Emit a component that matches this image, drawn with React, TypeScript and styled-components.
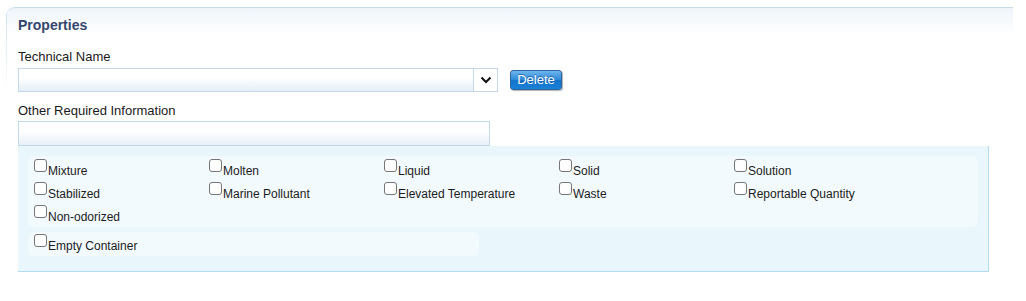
import styled, { createGlobalStyle } from 'styled-components';

const GlobalStyle = createGlobalStyle`
  body {
    margin: 0;
    background: #ffffff;
    font-family: "Liberation Sans", Arial, sans-serif;
  }
`;

const mainFlags = [
  'Mixture',
  'Molten',
  'Liquid',
  'Solid',
  'Solution',
  'Stabilized',
  'Marine Pollutant',
  'Elevated Temperature',
  'Waste',
  'Reportable Quantity',
  'Non-odorized',
];

const extraFlags = ['Empty Container'];

function Flag({ label }: { label: string }) {
  return (
    <StFlag>
      <StCheckbox type="checkbox" />
      <span>{label}</span>
    </StFlag>
  );
}

function App() {
  return (
    <>
      <GlobalStyle />
      <StPage>
        <StPanel>
          <StTitle>Properties</StTitle>
          <StBody>
            <StFieldLabel>Technical Name</StFieldLabel>
            <StSelectRow>
              <StSelect>
                <StSelectArrow>
                  <svg width="12" height="8" viewBox="0 0 12 8">
                    <path d="M1.5 1.5 L6 6 L10.5 1.5" fill="none" stroke="#111" strokeWidth="2" />
                  </svg>
                </StSelectArrow>
              </StSelect>
              <StDeleteButton>Delete</StDeleteButton>
            </StSelectRow>
            <StFieldLabel $gap={11}>Other Required Information</StFieldLabel>
            <StTextInput />
            <StFlagsPanel>
              <StFlagGroup $width={950} $pad={2}>
                {mainFlags.map((f) => (
                  <Flag key={f} label={f} />
                ))}
              </StFlagGroup>
              <StFlagGroup $width={451} $pad={1}>
                {extraFlags.map((f) => (
                  <Flag key={f} label={f} />
                ))}
              </StFlagGroup>
            </StFlagsPanel>
          </StBody>
        </StPanel>
      </StPage>
    </>
  );
}

export default App;

const StPage = styled.div`
  padding: 7px 13px 0 6px;
`;

const StPanel = styled.section`
  position: relative;
  border-top: 1px solid #c6dcea;
  border-top-left-radius: 9px;
  background: linear-gradient(to bottom, #eef5fa 0px, #ffffff 28px);
  padding-bottom: 20px;

  &::before {
    content: '';
    position: absolute;
    left: 0;
    top: 6px;
    width: 1px;
    height: 80px;
    background: linear-gradient(to bottom, #d3e4ef, rgba(211, 228, 239, 0));
  }
`;

const StTitle = styled.h2`
  margin: 0;
  padding: 9px 0 0 12px;
  color: #34466b;
  font-size: 14px;
  font-weight: bold;
  line-height: 16px;
`;

const StBody = styled.div`
  padding-left: 12px;
`;

const StFieldLabel = styled.div<{ $gap?: number }>`
  margin-top: ${(p) => p.$gap ?? 16}px;
  color: #1a1a1a;
  font-size: 13px;
  line-height: 15px;
`;

const StSelectRow = styled.div`
  display: flex;
  align-items: center;
  gap: 12px;
  margin-top: 4px;
`;

const StSelect = styled.div`
  display: flex;
  justify-content: flex-end;
  box-sizing: border-box;
  width: 480px;
  height: 24px;
  border: 1px solid #c3d9eb;
  background: linear-gradient(to bottom, #ffffff 40%, #e5eef8);
`;

const StSelectArrow = styled.div`
  display: flex;
  align-items: center;
  justify-content: center;
  width: 23px;
  border-left: 1px solid #c3d9eb;
  background: #ffffff;
`;

const StDeleteButton = styled.button`
  box-sizing: border-box;
  width: 52px;
  height: 20px;
  padding: 0;
  margin-top: -1px;
  border: 1px solid #2a66a0;
  border-radius: 3px;
  background: linear-gradient(to bottom, #6fb6ee 0%, #2d8ad8 48%, #1474cb 52%, #1a7fd6 100%);
  box-shadow: 1px 1px 1px rgba(0, 0, 0, 0.3);
  color: #ffffff;
  font-family: "Liberation Sans", Arial, sans-serif;
  font-size: 13px;
  line-height: 16px;
  text-shadow: 0 -1px 0 rgba(0, 40, 90, 0.45);
`;

const StTextInput = styled.div`
  box-sizing: border-box;
  width: 472px;
  height: 25px;
  margin-top: 3px;
  border: 1px solid #c3d9eb;
  background: linear-gradient(to bottom, #ffffff 40%, #e8f0f9);
`;

const StFlagsPanel = styled.div`
  display: flex;
  flex-direction: column;
  gap: 5px;
  box-sizing: border-box;
  width: 971px;
  padding: 10px 10px 15px 10px;
  border-right: 1px solid #b4dcf1;
  border-bottom: 1px solid #b4dcf1;
  background: #e9f6fc;
`;

const StFlagGroup = styled.div<{ $width: number; $pad: number }>`
  display: grid;
  grid-template-columns: repeat(5, 175px);
  grid-auto-rows: 23px;
  box-sizing: border-box;
  width: ${(p) => p.$width}px;
  padding: ${(p) => p.$pad}px 0 0 6px;
  border-radius: 6px;
  background: #f2fafe;
`;

const StFlag = styled.label`
  display: flex;
  align-items: flex-start;
  color: #1c1c1c;
  font-size: 12px;

  & > span {
    margin-top: 2px;
    line-height: 22px;
  }
`;

const StCheckbox = styled.input`
  appearance: none;
  box-sizing: border-box;
  width: 13px;
  height: 13px;
  margin: 1px 1px 0 0;
  border: 1px solid #767676;
  border-radius: 3px;
  background: #ffffff;
`;
